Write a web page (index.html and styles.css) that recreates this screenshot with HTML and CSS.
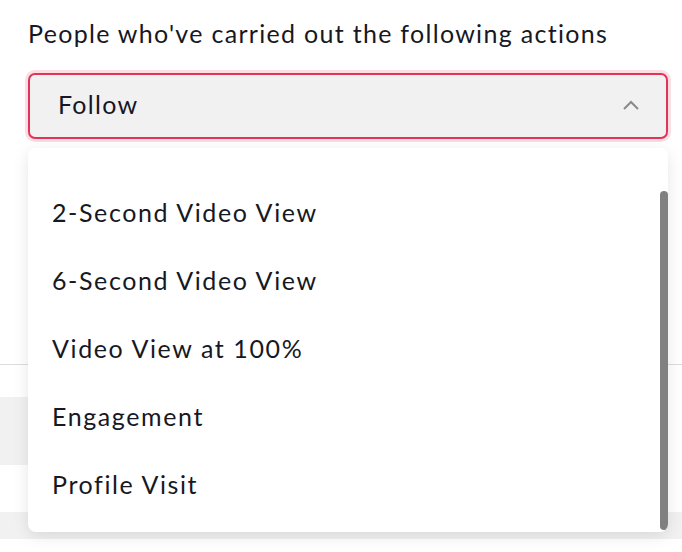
FILE: index.html
```html
<!DOCTYPE html>
<html>
<head>
<meta charset="utf-8">
<link rel="stylesheet" href="styles.css">
</head>
<body>
<div class="page">
  <div class="field">
    <div class="label">People who've carried out the following actions</div>
    <div class="select">
      <span class="value">Follow</span>
      <svg class="chev" width="18" height="12" viewBox="0 0 18 12"><polyline points="2,10 9,3 16,10" fill="none" stroke="#8a8a8a" stroke-width="2"/></svg>
    </div>
  </div>
  <div class="bg">
    <div class="bg-gap"></div>
    <div class="bg-line"></div>
    <div class="bg-row1"></div>
    <div class="bg-band"></div>
    <div class="bg-row2"></div>
    <div class="bg-band2"></div>
  </div>
  <div class="menu">
    <ul class="list">
      <li>2-Second Video View</li>
      <li>6-Second Video View</li>
      <li>Video View at 100%</li>
      <li>Engagement</li>
      <li>Profile Visit</li>
    </ul>
    <div class="scroll"></div>
  </div>
</div>
</body>
</html>
```
FILE: styles.css
```css
html, body { margin: 0; padding: 0; background: #fff; }
body { font-family: "Lato", "Liberation Sans", sans-serif; color: #161823; }
.page { position: relative; width: 682px; height: 552px; overflow: hidden; }
.field { padding: 17px 14px 0 28px; }
.label { font-size: 25px; letter-spacing: 1.3px; line-height: 32px; height: 32px; color: #161823; }
.select {
  margin-top: 24px;
  height: 62px;
  border: 2px solid #e2335b;
  border-radius: 7px;
  box-shadow: 0 0 0 3px #fbdde4;
  background: #f1f1f1;
  display: flex;
  align-items: center;
  justify-content: space-between;
  padding: 0 26px 0 28px;
}
.value { font-size: 25px; letter-spacing: 1.3px; margin-top: -4px; }
.chev { display: block; margin-top: -2px; }
.bg { display: flex; flex-direction: column; }
.bg-gap { height: 225px; }
.bg-line { height: 1px; background: #dcdcdc; }
.bg-row1 { height: 32px; }
.bg-band { height: 68px; background: #f1f1f1; width: 340px; }
.bg-row2 { height: 47px; }
.bg-band2 { height: 27px; background: #f1f1f1; }
.menu {
  position: absolute;
  left: 28px; top: 148px;
  width: 640px; height: 384px;
  background: #fff;
  border-radius: 8px;
  box-shadow: 0 4px 16px rgba(0,0,0,0.10);
  overflow: hidden;
}
.list { list-style: none; margin: 0; padding: 30px 0 0 24px; }
.list li { height: 68px; line-height: 68px; font-size: 25px; letter-spacing: 1.6px; color: #161823; }
.scroll {
  position: absolute;
  right: 0; top: 43px;
  width: 8px; height: 339px;
  background: #808080;
  border-radius: 4px;
}
```
